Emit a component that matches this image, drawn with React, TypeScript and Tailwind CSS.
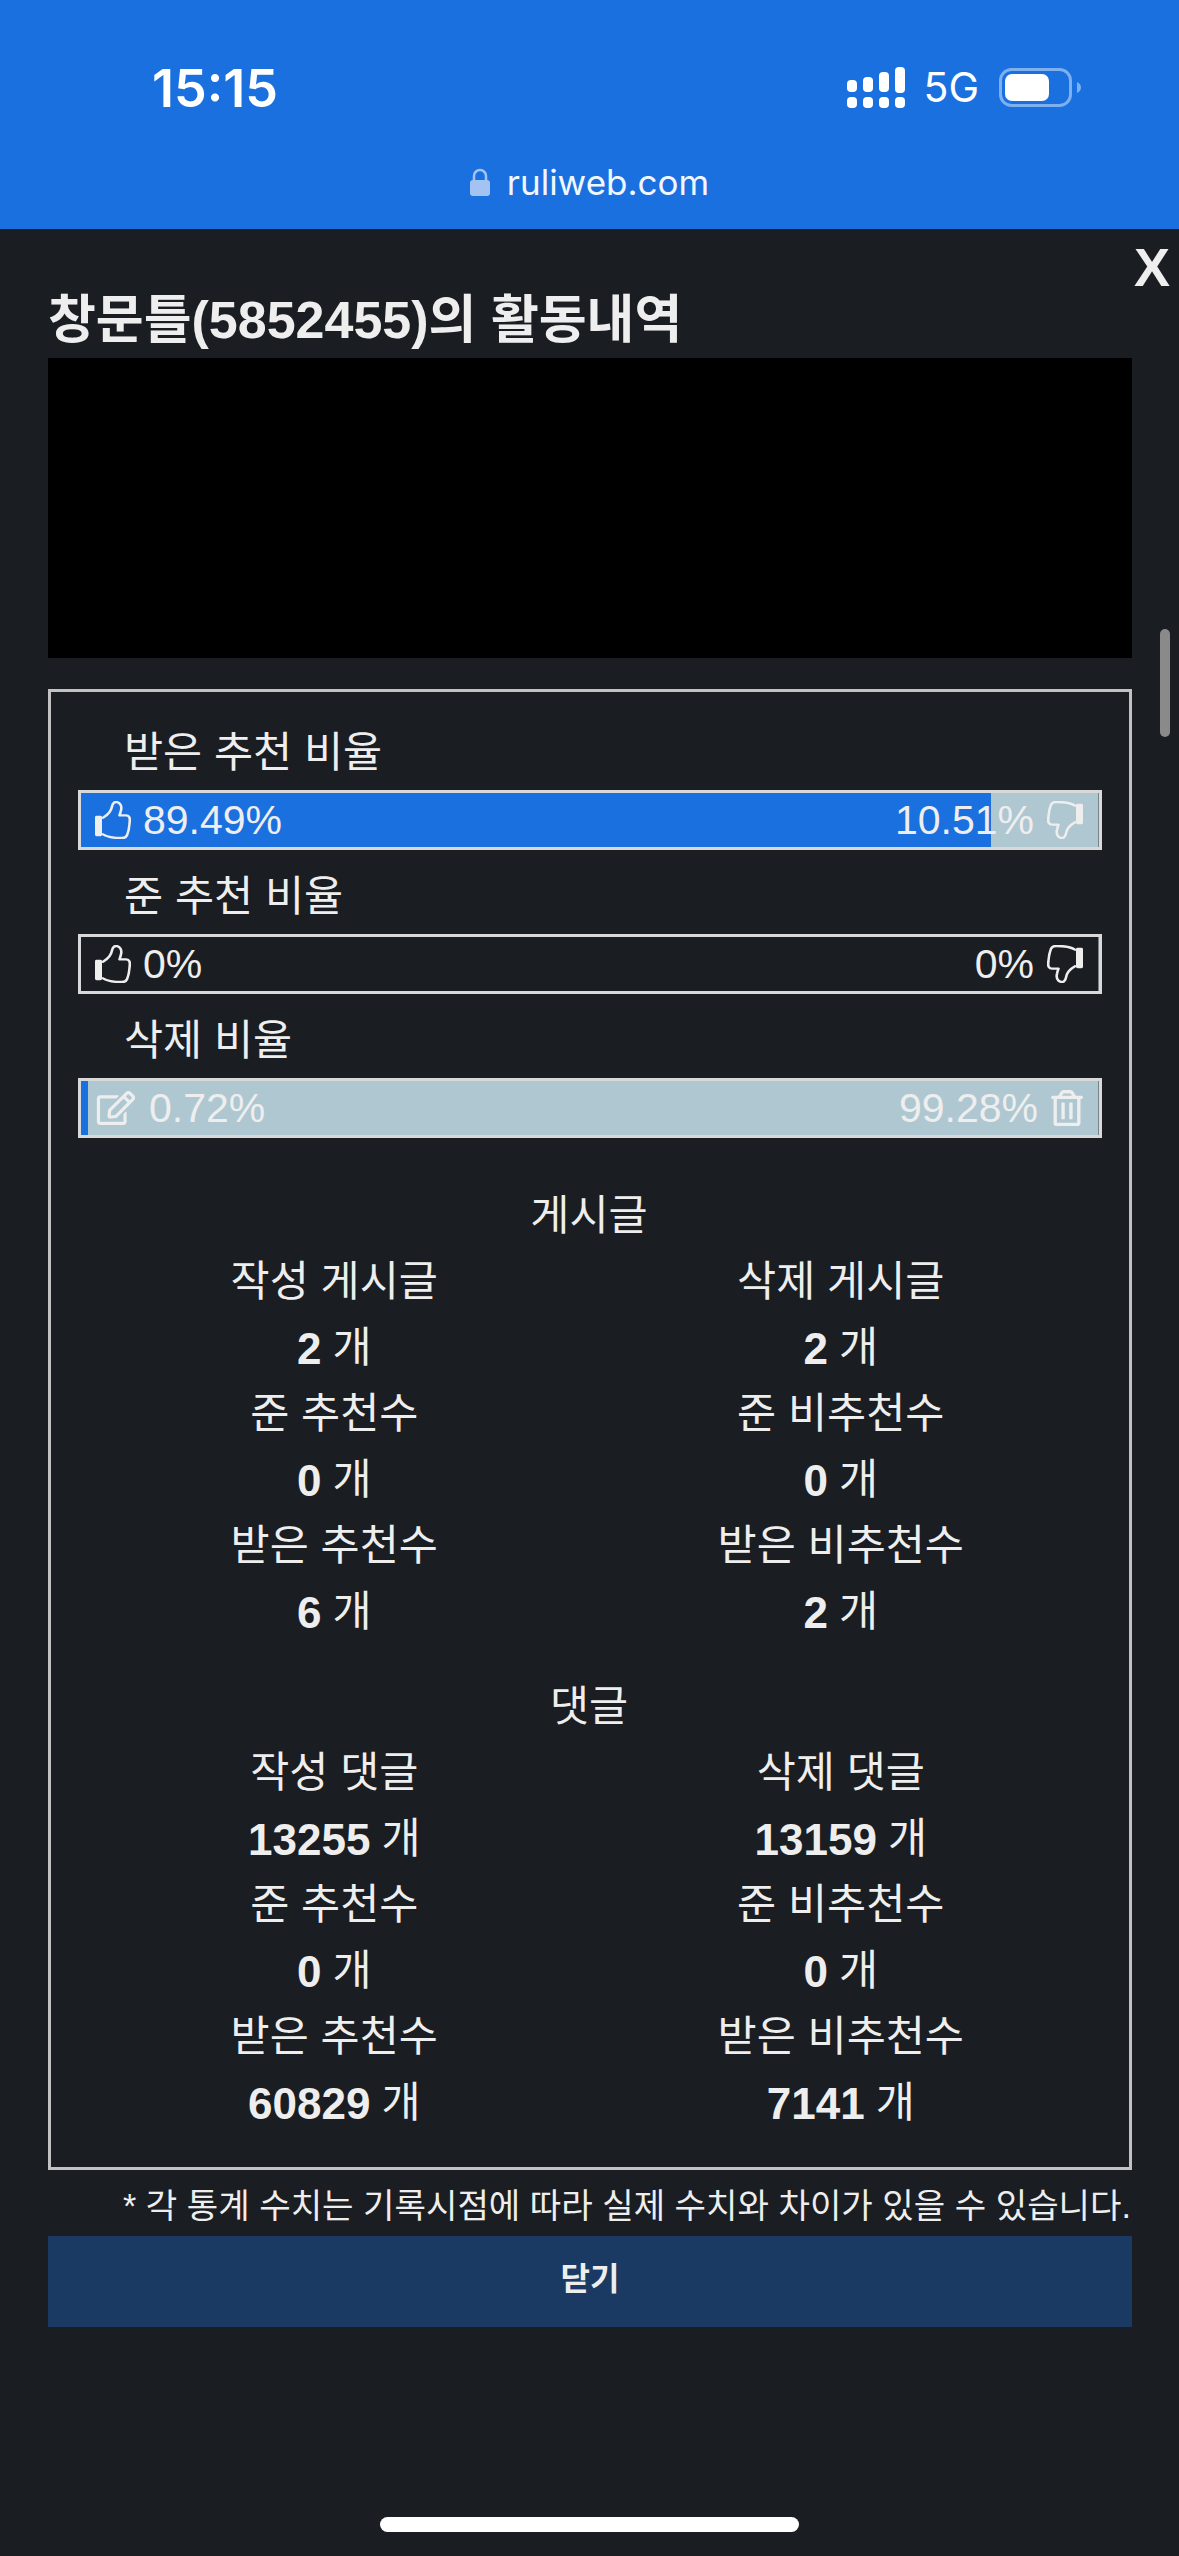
import React from "react";
import { FaRegEdit, FaRegTrashAlt } from "react-icons/fa";

const Thumb = ({ down = false }: { down?: boolean }) => (
  <svg viewBox="0 0 36 41" preserveAspectRatio="none" className={`w-[36px] h-[38px] shrink-0 ${down ? "rotate-180" : ""}`}>
    <rect x="0" y="16" width="7" height="22" rx="1.5" fill="currentColor" />
    <path
      d="M8 18 C13 15 16 12 17 6 C17.5 2 20 0.8 22 1.2 C25.5 2 27 6 26 10 C25.6 12 25 14 24.5 15.5 L31 15.5 C34 15.5 35 18 34.8 21 C34.5 27 33.5 33 32 37 C31 39.5 29 40 27 40 C20 40 13 39.5 8 36"
      fill="none"
      stroke="currentColor"
      strokeWidth="2.6"
      strokeLinecap="round"
      strokeLinejoin="round"
    />
  </svg>
);

const Bar = ({
  fill,
  rest,
  left,
  right,
  leftIcon,
  rightIcon,
}: {
  fill: string;
  rest: boolean;
  left: string;
  right: string;
  leftIcon: React.ReactNode;
  rightIcon: React.ReactNode;
}) => (
  <div className="relative h-[60px] border-[3px] border-[#d9d9d9]">
    <div className={`absolute inset-0 flex border-r border-[#77858b] ${rest ? "bg-[#afc7d1]" : ""}`}>
      <div className="h-full bg-[#1b70e0]" style={{ width: fill }} />
    </div>
    <div className="relative h-full flex items-center justify-between pl-[14px] pr-[16px] text-[41px] leading-none text-[#eeeeee]">
      <div className="flex items-center gap-[12px]">
        {leftIcon}
        <span>{left}</span>
      </div>
      <div className="flex items-center gap-[13px]">
        <span>{right}</span>
        {rightIcon}
      </div>
    </div>
  </div>
);

const Label = ({ children }: { children: React.ReactNode }) => (
  <div className="h-[84px] pt-[11px] pl-[46px] flex items-center text-[42.5px] text-[#eeeeee]">{children}</div>
);

const Stat = ({ label, value }: { label: string; value: string }) => (
  <div className="flex flex-col items-center">
    <div className="h-[66px] flex items-center">{label}</div>
    <div className="h-[66px] pt-[1px] flex items-center gap-[11px]">
      <b className="font-bold text-[44px]">{value}</b>
      <span>개</span>
    </div>
  </div>
);

const Section = ({ title, rows }: { title: string; rows: [string, string, string, string][] }) => (
  <div>
    <div className="h-[66px] flex items-center justify-center pr-[2px]">{title}</div>
    <div className="grid grid-cols-2 pl-[30px] pr-[35px]">
      {rows.map((r) => (
        <React.Fragment key={r[0]}>
          <Stat label={r[0]} value={r[1]} />
          <Stat label={r[2]} value={r[3]} />
        </React.Fragment>
      ))}
    </div>
  </div>
);

export default function App() {
  return (
    <div className="relative w-[1179px] h-[2556px] overflow-hidden bg-[#1a1d21] flex flex-col font-['Liberation_Sans','Noto_Sans_CJK_KR',sans-serif] text-[#eeeeee]">
      <header className="h-[229px] bg-[#1b70e0] text-white shrink-0 flex flex-col">
        <div className="h-[163px] flex items-start justify-between pl-[152px] pr-[98px] pt-[60px]">
          <span className="font-['Inter'] font-semibold text-[52px] leading-[58px]">15:15</span>
          <div className="flex items-center gap-[20px] pt-[7px]">
            <svg viewBox="0 0 58 41" className="w-[58px] h-[41px] -mr-[2px]" fill="#fff">
              <rect x="0" y="13" width="10" height="12" rx="4" />
              <rect x="16" y="10" width="10" height="15" rx="4" />
              <rect x="32" y="5" width="10" height="20" rx="4" />
              <rect x="48" y="0" width="10" height="26" rx="4" />
              <rect x="0" y="30" width="10" height="11" rx="4" />
              <rect x="16" y="30" width="10" height="11" rx="4" />
              <rect x="32" y="30" width="10" height="11" rx="4" />
              <rect x="48" y="30" width="10" height="11" rx="4" />
            </svg>
            <span className="font-['Inter'] text-[41px] leading-[41px]">5G</span>
            <svg viewBox="0 0 82 39" className="w-[82px] h-[39px]">
              <rect x="1.5" y="1.5" width="70" height="36" rx="11" fill="none" stroke="#7eb0f0" strokeWidth="3" />
              <rect x="6" y="6" width="44" height="27" rx="7" fill="#fff" />
              <path d="M78 14 C80.5 15 82 17 82 19.5 C82 22 80.5 24 78 25 Z" fill="#7eb0f0" />
            </svg>
          </div>
        </div>
        <div className="flex items-center justify-center gap-[17px] h-[38px]">
          <svg viewBox="0 0 20 28" className="w-[20px] h-[28px]">
            <path d="M4 13 V8 a6 6 0 0 1 12 0 V13" fill="none" stroke="#a3c4f3" strokeWidth="2.5" />
            <rect x="0" y="12" width="20" height="16" rx="3" fill="#a3c4f3" />
          </svg>
          <span className="text-[35px] leading-none font-['Inter'] text-[#f2f7ff]">ruliweb.com</span>
        </div>
      </header>

      <main className="flex-1 pl-[48px] pr-[47px] flex flex-col">
        <h1 className="h-[129px] pt-[52px] flex items-center text-[52px] font-bold leading-none text-[#eeeeee]">
          창문틀(5852455)의 활동내역
        </h1>
        <div className="h-[300px] bg-black" />
        <section className="mt-[31px] h-[1481px] border-[3px] border-[#c2c2c2] pt-[14px] text-[42.5px] leading-none">
          <div className="px-[27px]">
            <Label>받은 추천 비율</Label>
            <Bar fill="89.49%" rest left="89.49%" right="10.51%" leftIcon={<Thumb />} rightIcon={<Thumb down />} />
            <Label>준 추천 비율</Label>
            <Bar fill="0%" rest={false} left="0%" right="0%" leftIcon={<Thumb />} rightIcon={<Thumb down />} />
            <Label>삭제 비율</Label>
            <Bar
              fill="0.72%"
              rest
              left="0.72%"
              right="99.28%"
              leftIcon={<FaRegEdit className="w-[42px] h-[34px] shrink-0" />}
              rightIcon={<FaRegTrashAlt className="w-[32px] h-[36px] shrink-0" />}
            />
          </div>
          <div className="pt-[45px]">
            <Section
              title="게시글"
              rows={[
                ["작성 게시글", "2", "삭제 게시글", "2"],
                ["준 추천수", "0", "준 비추천수", "0"],
                ["받은 추천수", "6", "받은 비추천수", "2"],
              ]}
            />
            <div className="h-[29px]" />
            <Section
              title="댓글"
              rows={[
                ["작성 댓글", "13255", "삭제 댓글", "13159"],
                ["준 추천수", "0", "준 비추천수", "0"],
                ["받은 추천수", "60829", "받은 비추천수", "7141"],
              ]}
            />
          </div>
        </section>
        <p className="h-[66px] pt-[6px] pr-[1px] flex items-center justify-end text-[34.2px] leading-none text-[#eeeeee]">
          * 각 통계 수치는 기록시점에 따라 실제 수치와 차이가 있을 수 있습니다.
        </p>
        <button className="h-[91px] bg-[#1a3a63] text-[32px] font-bold text-[#eeeeee] pb-[6px]">닫기</button>
      </main>

      <div className="absolute left-[1134px] top-[240px] text-[54px] leading-[54px] font-bold text-[#eeeeee]">X</div>
      <div className="absolute left-[1160px] top-[629px] w-[10px] h-[108px] rounded-full bg-[#8a8a8a]" />
      <div className="absolute left-[380px] top-[2517px] w-[419px] h-[15px] rounded-full bg-white" />
    </div>
  );
}
